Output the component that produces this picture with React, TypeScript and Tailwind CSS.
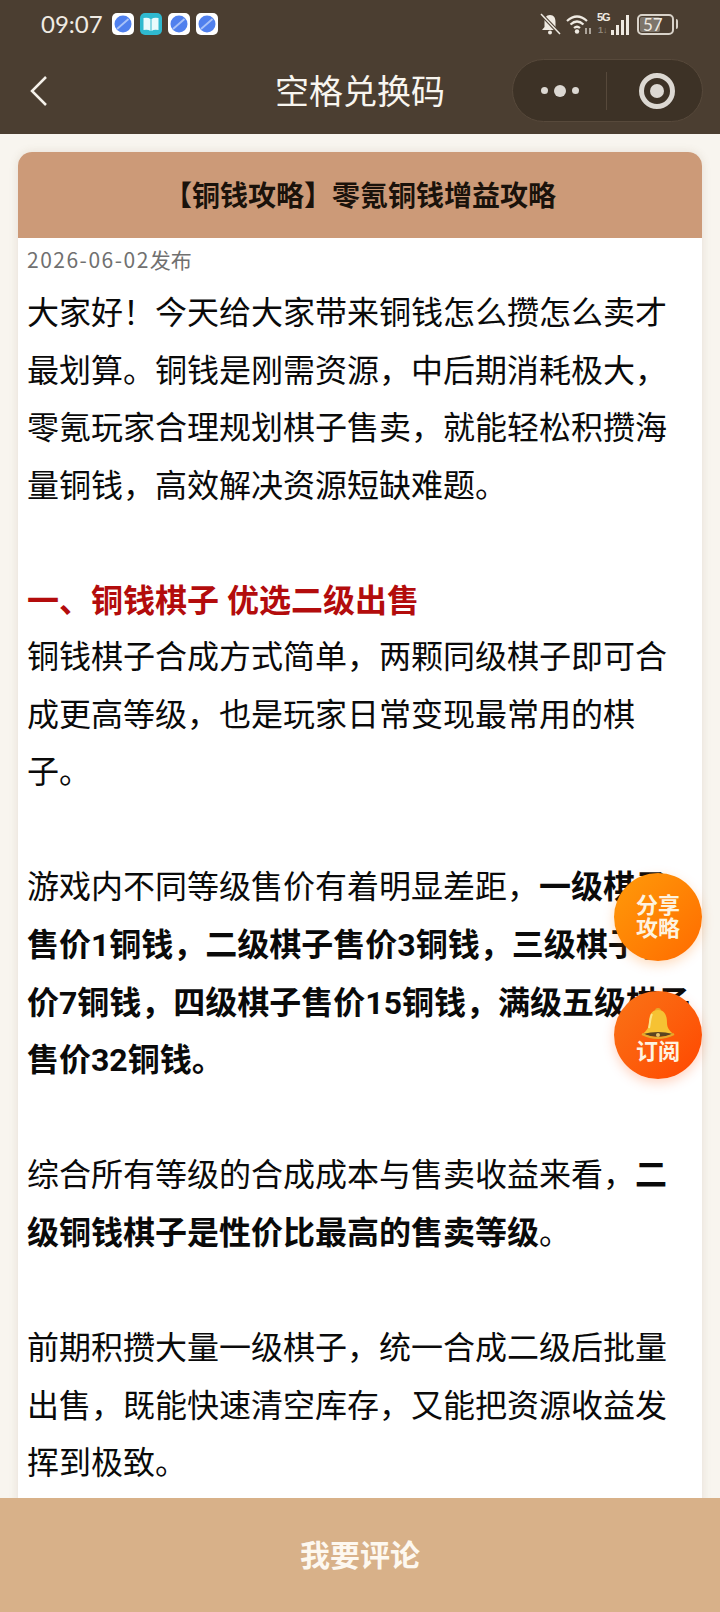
const sans = 'font-["Roboto","Noto_Sans_CJK_SC",sans-serif]'

function PlanetIcon() {
  return (
    <div className="flex h-[22px] w-[22px] items-center justify-center rounded-[5px] bg-white">
      <svg viewBox="0 0 22 22" className="h-[22px] w-[22px]">
        <circle cx="11" cy="11" r="8.500" fill="#5080ee" />
        <path d="M5 16 L16.500 6" stroke="#a9c2f8" strokeWidth="1.800" />
      </svg>
    </div>
  )
}

function BookIcon() {
  return (
    <div className="flex h-[22px] w-[22px] items-center justify-center rounded-[5px] bg-[#2fb9cf]">
      <svg viewBox="0 0 22 22" className="h-[22px] w-[22px]">
        <path d="M3.500 5 Q8 4 10.500 6 V18 Q8 16 3.500 17 Z" fill="#e9fafc" />
        <path d="M18.500 5 Q14 4 11.500 6 V18 Q14 16 18.500 17 Z" fill="#e9fafc" />
      </svg>
    </div>
  )
}

function StatusBar() {
  return (
    <div className="flex h-[50px] items-center justify-between pb-[2px] pl-[41px] pr-[42px]">
      <div className="flex items-center gap-[6px]">
        <span className="mr-[3px] font-['Lato',sans-serif] text-[24px] leading-none text-[#f0ebe3]">09:07</span>
        <PlanetIcon />
        <BookIcon />
        <PlanetIcon />
        <PlanetIcon />
      </div>
      <div className="flex items-center gap-[5px]">
        <svg viewBox="0 0 22 24" className="h-[24px] w-[22px]">
          <path d="M11 3 C7 3 5.500 6 5.500 10 V15 L3 18 H19 L16.500 15 V10 C16.500 6 15 3 11 3 Z" fill="#efeae2" />
          <circle cx="11" cy="20.500" r="2" fill="#efeae2" />
          <path d="M2 2 L21 22" stroke="#4b3e31" strokeWidth="3.500" />
          <path d="M2 2 L21 22" stroke="#efeae2" strokeWidth="1.500" />
        </svg>
        <svg viewBox="0 0 26 22" className="h-[22px] w-[26px]">
          <path d="M1 8 Q11 -1 21 8 M4.500 11.500 Q11 5.500 17.500 11.500 M8 15 Q11 12.500 14 15" fill="none" stroke="#efeae2" strokeWidth="2.200" />
          <circle cx="11" cy="18.500" r="2.200" fill="#efeae2" />
          <path d="M20 15 V21 M24 15 V21" stroke="#efeae2" strokeWidth="1.200" />
        </svg>
        <div className="relative h-[22px] w-[32px]">
          <span className="absolute left-0 top-[-1px] font-['Liberation_Sans',sans-serif] text-[11px] font-bold leading-[11px] tracking-[-1px] text-[#efeae2]">5G</span>
          <span className="absolute left-[1px] top-[12px] font-['Liberation_Sans',sans-serif] text-[9px] font-bold leading-[10px] text-[#8f877c]">1↓</span>
          <div className="absolute bottom-0 right-0 flex items-end gap-[2px]">
            <div className="h-[5px] w-[3px] bg-[#efeae2]" />
            <div className="h-[10px] w-[3px] bg-[#efeae2]" />
            <div className="h-[15px] w-[3px] bg-[#efeae2]" />
            <div className="h-[20px] w-[3px] bg-[#efeae2]" />
          </div>
        </div>
        <div className="ml-[3px] flex items-center gap-[2px]">
          <div className="flex h-[21px] w-[37px] items-center rounded-[5px] border-2 border-[#d8d2c9] p-[1px]">
            <div className="flex h-full w-[65%] items-center rounded-[2px] bg-[#7d756b]">
              <span className="ml-[3px] font-['Lato',sans-serif] text-[17px] leading-none text-[#f0ebe3]">57</span>
            </div>
          </div>
          <div className="h-[10px] w-[2px] rounded-r bg-[#d8d2c9]" />
        </div>
      </div>
    </div>
  )
}

function NavBar() {
  return (
    <div className="relative flex h-[84px] items-start justify-center">
      <svg viewBox="0 0 20 32" className="absolute left-[29px] top-[25px] h-[32px] w-[20px]">
        <path d="M17 2 L3 16 L17 30" fill="none" stroke="#f5f1ea" strokeWidth="2.500" />
      </svg>
      <span className="mt-[20px] text-[34px] leading-[44px] text-[#f8f5ef]">空格兑换码</span>
      <div className="absolute left-[512px] top-[9px] flex h-[63px] w-[191px] items-center rounded-full border border-[#57493b] bg-[#3d3226]">
        <div className="flex flex-1 items-center justify-center gap-[6px]">
          <div className="h-[7px] w-[7px] rounded-full bg-[#dcd8d2]" />
          <div className="h-[12px] w-[12px] rounded-full bg-[#dcd8d2]" />
          <div className="h-[7px] w-[7px] rounded-full bg-[#dcd8d2]" />
        </div>
        <div className="h-[38px] w-px bg-[#57493b]" />
        <div className="flex w-[95px] items-center justify-center pl-[4px]">
          <div className="flex h-[36px] w-[36px] items-center justify-center rounded-full border-[5px] border-[#dcd8d2]">
            <div className="h-[14px] w-[14px] rounded-full bg-[#dcd8d2]" />
          </div>
        </div>
      </div>
    </div>
  )
}

function FloatButtons() {
  return (
    <>
      <div className="absolute left-[614px] top-[873px] flex h-[88px] w-[88px] flex-col items-center justify-center rounded-full bg-gradient-to-br from-[#ff9a0a] to-[#ff6a00] text-[22px] font-bold leading-[23px] text-[#fdf3e0] shadow-[0_4px_12px_rgba(255,120,0,0.25)]">
        <span>分享</span>
        <span>攻略</span>
      </div>
      <div className="absolute left-[614px] top-[991px] flex h-[88px] w-[88px] flex-col items-center justify-center rounded-full bg-gradient-to-br from-[#f97316] to-[#ff4500] text-[22px] font-bold leading-[23px] text-[#fdf3e0] shadow-[0_4px_12px_rgba(255,80,0,0.25)]">
        <svg viewBox="0 0 36 34" className="mb-[-1px] h-[34px] w-[36px]">
          <circle cx="18" cy="4" r="3" fill="#e8a92a" />
          <path d="M18 3 C11 3 9 9 9 16 C9 21 6 24 3 27 H33 C30 24 27 21 27 16 C27 9 25 3 18 3 Z" fill="#f6c233" />
          <path d="M12 7 C10 11 10 17 9 21" stroke="#fbe58a" strokeWidth="2" fill="none" />
          <path d="M3 27 Q18 33 33 27 Q18 23 3 27 Z" fill="#5b4420" />
          <path d="M2 27 Q18 35 34 27" stroke="#e8a92a" strokeWidth="2" fill="none" />
          <circle cx="18" cy="28" r="2" fill="#e8c66a" />
        </svg>
        <span>订阅</span>
      </div>
    </>
  )
}

export default function App() {
  return (
    <div className={`relative h-[1612px] w-[720px] overflow-hidden bg-[#f8f5ef] ${sans}`}>
      <div className="bg-[#4b3e31]">
        <StatusBar />
        <NavBar />
      </div>

      <div className="mx-[18px] mt-[18px] h-[1400px] rounded-t-[14px] bg-white shadow-[0_0_10px_rgba(120,90,60,0.14)]">
        <div className="flex h-[86px] items-center justify-center rounded-t-[14px] bg-[#cc9a78] pt-[3px] text-[28px] font-bold text-[#1a120b]">
          【铜钱攻略】零氪铜钱增益攻略
        </div>
        <div className="px-[9px]">
          <p className="mt-[7px] font-['Noto_Sans_CJK_SC',sans-serif] text-[21px] leading-[28px] text-[#707070]">
            <span className="tracking-[1.5px]">2026-06-02</span>发布
          </p>
          <div className="mt-[12px] text-[32px] leading-[57.6px] text-[#0a0a0a]">
            <p>大家好！今天给大家带来铜钱怎么攒怎么卖才最划算。铜钱是刚需资源，中后期消耗极大，零氪玩家合理规划棋子售卖，就能轻松积攒海量铜钱，高效解决资源短缺难题。</p>
            <p className="mt-[57.6px] font-bold leading-[56px] text-[#b30c0c]">一、铜钱棋子 优选二级出售</p>
            <p>铜钱棋子合成方式简单，两颗同级棋子即可合成更高等级，也是玩家日常变现最常用的棋子。</p>
            <p className="mt-[57.6px]">
              游戏内不同等级售价有着明显差距，
              <b>一级棋子售价1铜钱，二级棋子售价3铜钱，三级棋子售价7铜钱，四级棋子售价15铜钱，满级五级棋子售价32铜钱。</b>
            </p>
            <p className="mt-[57.6px]">
              综合所有等级的合成成本与售卖收益来看，<b>二级铜钱棋子是性价比最高的售卖等级</b>。
            </p>
            <p className="mt-[57.6px]">前期积攒大量一级棋子，统一合成二级后批量出售，既能快速清空库存，又能把资源收益发挥到极致。</p>
          </div>
        </div>
      </div>

      <FloatButtons />

      <div className="absolute bottom-0 left-0 flex h-[114px] w-full items-center justify-center bg-[#d8b189] text-[30px] font-bold text-[#fdf8f0]">
        我要评论
      </div>
    </div>
  )
}
